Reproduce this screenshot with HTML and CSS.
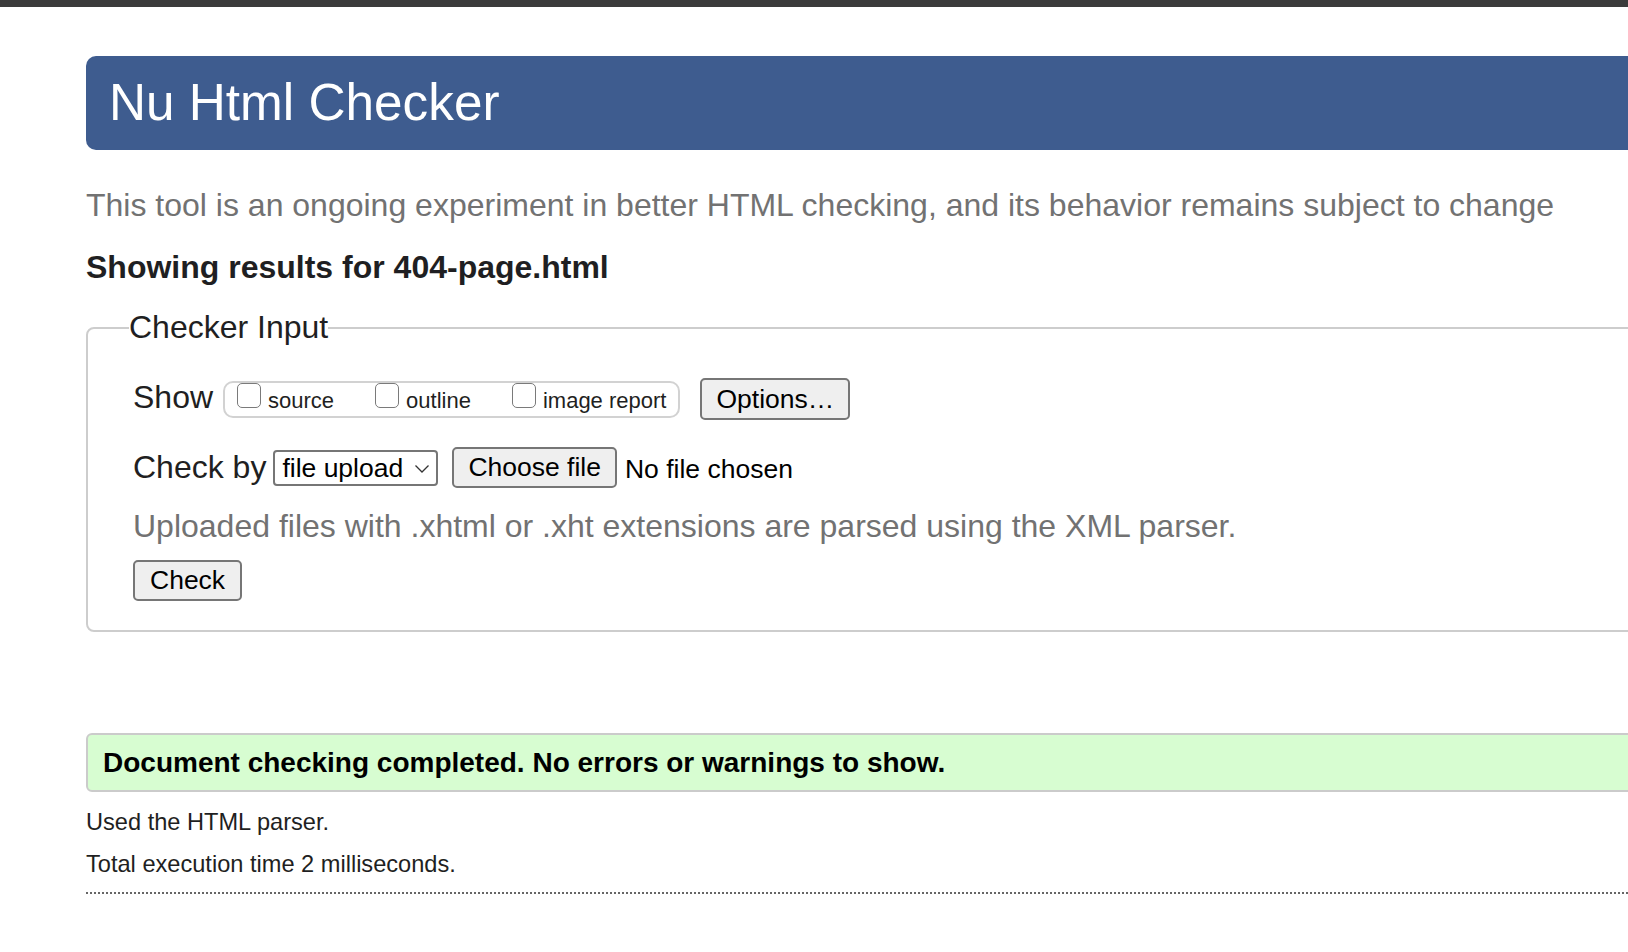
FILE: index.html
```html
<!DOCTYPE html>
<html lang="en">
<head>
<meta charset="utf-8">
<title>Nu Html Checker</title>
<link rel="stylesheet" href="styles.css">
</head>
<body>
<div class="topbar"></div>
<div class="page">
  <header class="banner"><h1>Nu Html Checker</h1></header>
  <p class="intro">This tool is an ongoing experiment in better HTML checking, and its behavior remains subject to change</p>
  <p class="showing">Showing results for 404-page.html</p>
  <fieldset class="input">
    <legend>Checker Input</legend>
    <div class="row row-show">
      <span class="label">Show</span>
      <span class="group">
        <label class="opt"><input type="checkbox"><span>source</span></label>
        <label class="opt"><input type="checkbox"><span>outline</span></label>
        <label class="opt"><input type="checkbox"><span>image report</span></label>
      </span>
      <button class="btn btn-options" type="button">Options…</button>
    </div>
    <div class="row row-by">
      <span class="label">Check by</span>
      <span class="select-wrap">
        <select class="select"><option>file upload</option></select>
        <svg class="chev" width="16" height="10" viewBox="0 0 16 10"><path d="M1.5 1.5 L8 8 L14.5 1.5" fill="none" stroke="#333" stroke-width="1.3"/></svg>
      </span>
      <button class="btn btn-file" type="button">Choose file</button>
      <span class="nofile">No file chosen</span>
    </div>
    <p class="note">Uploaded files with .xhtml or .xht extensions are parsed using the XML parser.</p>
    <button class="btn btn-check" type="submit">Check</button>
  </fieldset>
  <div class="success">Document checking completed. No errors or warnings to show.</div>
  <p class="meta meta-first">Used the HTML parser.</p>
  <p class="meta">Total execution time 2 milliseconds.</p>
  <hr class="dots">
</div>
</body>
</html>
```
FILE: styles.css
```css
html, body {
  margin: 0;
  padding: 0;
  background: #ffffff;
}
body {
  font-family: "Liberation Sans", Arial, Helvetica, sans-serif;
  color: #1f1f22;
  overflow-x: hidden;
}
.topbar {
  height: 7px;
  background: #3b3b3b;
}
.page {
  padding-left: 86px;
  overflow: hidden;
}
.banner {
  margin: 49px -40px 0 0;
  height: 94px;
  background: #3e5c8f;
  border-radius: 10px 0 0 10px;
  display: flex;
  align-items: center;
}
.banner h1 {
  margin: 0;
  padding-left: 23px;
  font-size: 51.3px;
  font-weight: normal;
  color: #ffffff;
  line-height: 60px;
}
.intro {
  margin: 35px 0 0;
  font-size: 32px;
  line-height: 40px;
  color: #727272;
  white-space: nowrap;
}
.showing {
  margin: 22px 0 0;
  font-size: 32px;
  line-height: 40px;
  font-weight: bold;
  color: #1f1f22;
}
.input {
  margin: 20px -40px 0 0;
  padding: 0 0 29px 45px;
  border: 2px solid #cdcdcd;
  border-radius: 8px;
  min-width: 0;
}
.input legend {
  margin-left: -4px;
  padding: 0 0 2px 0;
  font-size: 32px;
  line-height: 40px;
  color: #1f1f22;
}
.row {
  display: flex;
  align-items: flex-start;
}
.row-show {
  margin-top: 29px;
  height: 42px;
}
.row-by {
  margin-top: 27px;
  height: 41px;
}
.label {
  font-size: 32px;
  line-height: 40px;
  white-space: nowrap;
}
.row-show .label {
  margin-top: -1px;
}
.group {
  margin: 3px 0 0 10px;
  height: 37px;
  box-sizing: border-box;
  border: 2px solid #d2d2d2;
  border-radius: 10px;
  padding: 0 12px 0 12px;
  display: flex;
  gap: 41px;
}
.opt {
  display: flex;
  align-items: flex-start;
  gap: 7px;
  font-size: 22px;
  line-height: 25px;
  white-space: nowrap;
}
.opt input {
  appearance: none;
  -webkit-appearance: none;
  margin: 0;
  width: 24px;
  height: 25px;
  box-sizing: border-box;
  border: 1.5px solid #7a7a7a;
  border-radius: 5px;
  background: #ffffff;
}
.opt span {
  padding-top: 5px;
}
.btn {
  font-family: "Liberation Sans", Arial, Helvetica, sans-serif;
  font-size: 26.5px;
  color: #000000;
  background: #efefef;
  border: 2px solid #767676;
  border-radius: 5px;
  box-sizing: border-box;
  white-space: nowrap;
  line-height: 1;
}
.btn-options {
  margin-left: 20px;
  height: 42px;
  padding: 0 14px;
}
.select-wrap {
  position: relative;
  margin: 3px 0 0 7px;
  display: inline-block;
}
.select {
  appearance: none;
  -webkit-appearance: none;
  width: 165px;
  height: 36px;
  box-sizing: border-box;
  border: 2px solid #767676;
  border-radius: 4px;
  background: #ffffff;
  padding: 0 0 0 7px;
  font-family: "Liberation Sans", Arial, Helvetica, sans-serif;
  font-size: 26.5px;
  color: #000000;
  display: block;
}
.chev {
  position: absolute;
  right: 8px;
  top: 14px;
  pointer-events: none;
}
.btn-file {
  margin-left: 14px;
  height: 41px;
  padding: 0 14px;
}
.nofile {
  margin: 2px 0 0 8px;
  font-size: 26.5px;
  line-height: 40px;
  color: #000000;
  white-space: nowrap;
}
.note {
  margin: 18px 0 0;
  font-size: 32px;
  line-height: 40px;
  color: #727272;
  white-space: nowrap;
}
.btn-check {
  margin-top: 14px;
  height: 41px;
  padding: 0 15px;
  display: block;
}
.success {
  margin: 101px -40px 0 0;
  height: 59px;
  box-sizing: border-box;
  border: 2px solid #cbcbcb;
  border-radius: 6px;
  background: #d7fdd1;
  padding-left: 15px;
  font-size: 28px;
  line-height: 55px;
  font-weight: bold;
  color: #000000;
  white-space: nowrap;
}
.meta {
  margin: 14px 0 0;
  font-size: 23.6px;
  line-height: 28px;
  color: #1f1f22;
}
.meta-first {
  margin-top: 16px;
}
.dots {
  margin: 14px -40px 0 0;
  height: 0;
  border: 0;
  border-top: 2px dotted #666666;
}
```
